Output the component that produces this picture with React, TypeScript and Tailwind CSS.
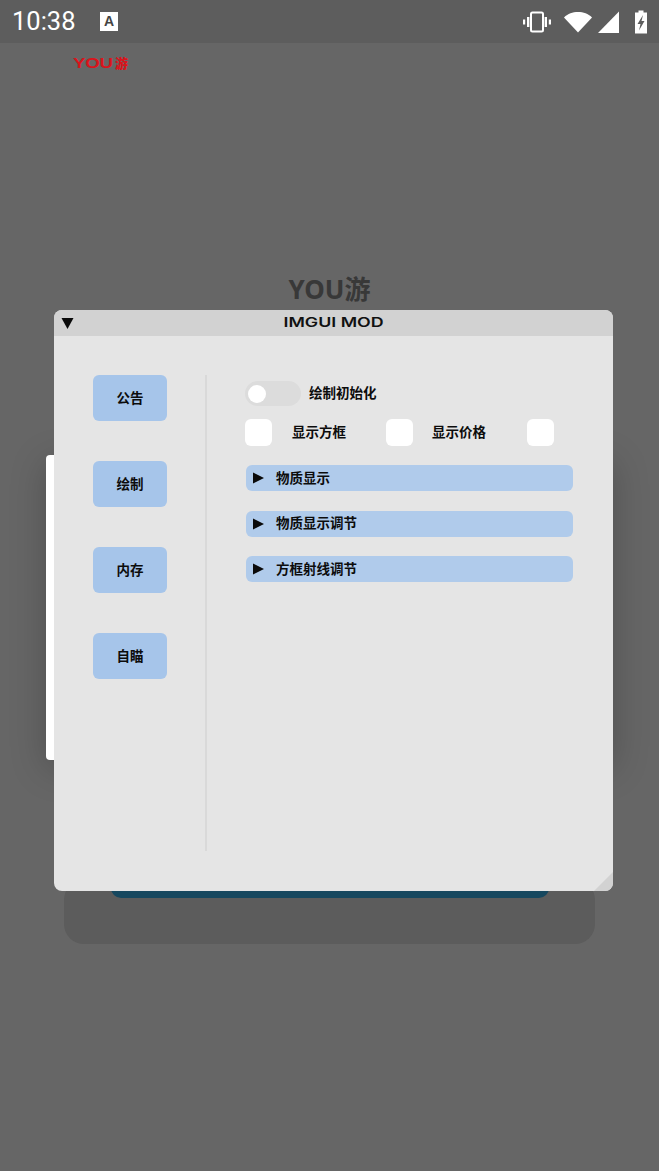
const cjk = "font-['Inter','Noto_Sans_CJK_SC',sans-serif]";

function Tab({ label }: { label: string }) {
  return (
    <div className="flex h-[46px] w-[74px] items-center justify-center rounded-[6px] bg-[#a6c5ea] text-[13.5px] font-bold text-[#0c0c0c]">
      {label}
    </div>
  );
}

function Check() {
  return <div className="h-[27px] w-[27px] rounded-[6px] bg-white" />;
}

function Row({ label }: { label: string }) {
  return (
    <div className="flex h-[26px] w-[327px] items-center rounded-[6px] bg-[#b0cbeb] pl-[7px] text-[13.5px] font-bold text-[#0c0c0c]">
      <svg width="11" height="12" viewBox="0 0 11 12"><path d="M0 0.5L11 6L0 11.5Z" fill="#0a0a0a" /></svg>
      <span className="ml-[12px]">{label}</span>
    </div>
  );
}

export default function App() {
  return (
    <div className={`relative h-[1171px] w-[659px] overflow-hidden bg-[#666666] ${cjk}`}>
      {/* status bar */}
      <div className="flex h-[43px] items-center bg-[#5d5d5d] pl-[12px] pr-[11px] text-white">
        <span className="w-[65px] font-['Roboto',sans-serif] text-[25.5px] leading-none">10:38</span>
        <div className="ml-[23px] flex h-[19px] w-[18px] justify-center bg-white pt-[2px]">
          <span className="font-['Liberation_Sans',sans-serif] text-[14px] font-bold leading-none text-[#444]">A</span>
        </div>
        <div className="ml-auto flex items-center">
          <svg width="30" height="24" viewBox="0 0 30 24" fill="none">
            <rect x="9" y="2.500" width="12" height="19" rx="1.500" stroke="white" strokeWidth="2" />
            <path d="M5 7h2.400v10H5zM22.600 7H25v10h-2.400zM1 9.500h2.200v5H1zM26.800 9.500H29v5h-2.200z" fill="white" />
          </svg>
          <svg className="ml-[12px]" width="28" height="22" viewBox="0 0 28 22"><path d="M0 6.500C4 2.500 8.500 1 14 1s10 1.500 14 5.500L14 21.500Z" fill="white" /></svg>
          <svg className="ml-[5px]" width="23" height="24" viewBox="0 0 23 24"><path d="M22 1.500V23H1Z" fill="white" /></svg>
          <svg className="ml-[14px]" width="14" height="24" viewBox="0 0 14 24">
            <path d="M4.500 0.500h5V2.500h3.500V23.500H1V2.500h3.500Z" fill="white" />
            <path d="M9 5L3.500 14h3L5 20.500 10.500 11H7.500Z" fill="#5d5d5d" />
          </svg>
        </div>
      </div>

      {/* app underneath */}
      <div className="ml-[73px] mt-[10px] font-['Liberation_Sans','Noto_Sans_CJK_SC',sans-serif] text-[15px] font-bold leading-[20px] tracking-[-0.2px] text-[#d9141c]">
        <span className="inline-block origin-left scale-x-[1.25]">YOU</span><span className="ml-[10px] text-[13px] font-black">游</span>
      </div>
      <div className="mt-[197px] text-center font-['Noto_Sans','Noto_Sans_CJK_SC',sans-serif] text-[26px] font-bold leading-[36px] text-[#383838]">
        YOU游
      </div>

      {/* dialog behind the mod window */}
      <div className="absolute left-[46px] top-[455px] h-[305px] w-[567px] rounded-[4px] bg-white shadow-[0_8px_36px_rgba(0,0,0,0.22)]" />
      <div className="absolute left-[64px] top-[880px] h-[64px] w-[531px] rounded-[20px] bg-[#5c5c5c]" />
      <div className="absolute left-[111px] top-[880px] h-[18px] w-[438px] rounded-b-[10px] bg-[#17485f]" />

      {/* mod window */}
      <div className="absolute left-[54px] top-[310px] flex h-[581px] w-[558.500px] flex-col overflow-hidden rounded-[8px] bg-[#e5e5e5]">
        <div className="relative flex h-[26px] shrink-0 items-center justify-center bg-[#d2d2d2]">
          <svg className="absolute left-[7px] top-[8px]" width="13" height="11" viewBox="0 0 13 11"><path d="M0.500 0H12.500L6.500 11Z" fill="#0a0a0a" /></svg>
          <span className="origin-center scale-x-[1.37] font-['Inter',sans-serif] text-[13px] font-semibold text-[#111]">IMGUI MOD</span>
        </div>
        <div className="flex flex-1 pt-[39px]">
          <div className="mb-[40px] flex w-[153px] shrink-0 flex-col gap-[40px] border-r-[2px] border-[#d9d9d9] pl-[39px]">
            <Tab label="公告" />
            <Tab label="绘制" />
            <Tab label="内存" />
            <Tab label="自瞄" />
          </div>
          <div className="flex flex-col pl-[39px] pt-[6px] text-[13.500px] font-bold text-[#0c0c0c]">
            <div className="-ml-[1px] flex h-[25px] items-center">
              <div className="flex h-[25px] w-[56px] items-center rounded-full bg-[#dcdcdc] pl-[3px]">
                <div className="h-[18px] w-[18px] rounded-full bg-white" />
              </div>
              <span className="ml-[8px]">绘制初始化</span>
            </div>
            <div className="-ml-[1px] mt-[13px] flex h-[27px] items-center">
              <Check />
              <span className="ml-[20px] w-[94px]">显示方框</span>
              <Check />
              <span className="ml-[19px] w-[95px]">显示价格</span>
              <Check />
            </div>
            <div className="mt-[19px] flex flex-col gap-[19.500px]">
              <Row label="物质显示" />
              <Row label="物质显示调节" />
              <Row label="方框射线调节" />
            </div>
          </div>
        </div>
        <svg className="absolute bottom-0 right-0" width="19" height="19" viewBox="0 0 19 19"><path d="M19 0V19H0Z" fill="#d2d2d2" /></svg>
      </div>
    </div>
  );
}
